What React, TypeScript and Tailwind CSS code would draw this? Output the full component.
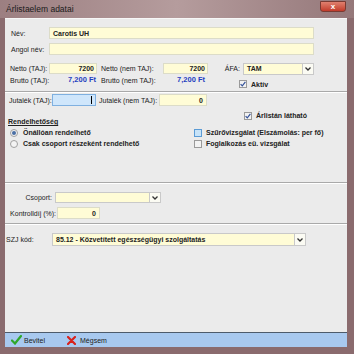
import React from "react";

function Box({ checked, hl }: { checked?: boolean; hl?: boolean }) {
  return (
    <div
      className={
        hl
          ? "w-[8px] h-[8px] border border-[#5b9bd5] bg-[#c7e3f8] flex items-center justify-center shrink-0"
          : "w-[8px] h-[8px] border border-[#9a9a9a] bg-[#f2f2f2] flex items-center justify-center shrink-0"
      }
    >
      {checked && (
        <svg width="6" height="6" viewBox="0 0 6 6">
          <path d="M0.6 3.1 L2.3 4.9 L5.4 0.9" stroke="#34529a" strokeWidth="1.2" fill="none" />
        </svg>
      )}
    </div>
  );
}

function Radio({ on }: { on?: boolean }) {
  return (
    <div className="w-[8px] h-[8px] rounded-full border border-[#a0a0a0] bg-[#f3f3f3] flex items-center justify-center shrink-0">
      {on && <div className="w-[4px] h-[4px] rounded-full bg-[#4a6fa5]" />}
    </div>
  );
}

function Arrow() {
  return (
    <div className="w-[11px] h-full border-l border-[#c9c9c9] bg-[#fbfbf3] flex items-center justify-center shrink-0">
      <svg width="6" height="4" viewBox="0 0 6 4">
        <path d="M0.5 0.5 L3 3 L5.5 0.5" stroke="#333" strokeWidth="1.3" fill="none" />
      </svg>
    </div>
  );
}

export default function App() {
  return (
    <div className="w-[354px] h-[354px] flex flex-col bg-[#8a6b6e] font-['Liberation_Sans',sans-serif] text-[7px] text-[#222] leading-none overflow-hidden whitespace-nowrap">
      {/* title bar */}
      <div className="h-[18px] flex items-center pl-[6px] pr-[8px] bg-gradient-to-r from-[#9c7f81] via-[#b59c9d] to-[#95787a] shrink-0">
        <span className="text-[8.5px] text-[#1a1a1a]">Árlistaelem adatai</span>
        <div className="ml-auto w-[26px] h-[11px] -mt-[5px] rounded-b-[3px] bg-gradient-to-b from-[#e0806f] to-[#c23a2a] border border-[#7a3a32] flex items-center justify-center">
          <span className="text-white font-bold text-[8px]">x</span>
        </div>
      </div>

      <div className="flex-1 flex pl-[5px] pr-[7px]">
        <div className="flex-1 flex flex-col bg-[#ebebeb] border-t border-[#f7f7f7]">
          {/* Név */}
          <div className="flex items-center h-[12px] mt-[8px]">
            <div className="w-[44px] pl-[6px]">Név:</div>
            <div className="w-[265px] h-full bg-[#fffcd6] border border-[#dcdcc8] flex items-center pl-[3px] font-bold">
              Carotis UH
            </div>
          </div>
          {/* Angol név */}
          <div className="flex items-center h-[12px] mt-[4px]">
            <div className="w-[44px] pl-[6px]">Angol név:</div>
            <div className="w-[265px] h-full bg-[#fffcd6] border border-[#dcdcc8]" />
          </div>
          {/* Netto */}
          <div className="flex items-center h-[11px] mt-[8px]">
            <div className="w-[44px] pl-[5px]">Netto (TAJ):</div>
            <div className="w-[48px] h-full bg-[#fffcd6] border border-[#dcdcc8] flex items-center justify-end pr-[2px] font-bold">
              7200
            </div>
            <div className="w-[66px] pl-[4px]">Netto (nem TAJ):</div>
            <div className="w-[45px] h-full bg-[#fffcd6] border border-[#dcdcc8] flex items-center justify-end pr-[2px] font-bold">
              7200
            </div>
            <div className="w-[35px] text-right pr-[3px]">ÁFA:</div>
            <div className="w-[71px] h-[12px] bg-[#fffcd6] border border-[#c9c9c9] flex items-center">
              <span className="flex-1 pl-[3px] font-bold">TAM</span>
              <Arrow />
            </div>
          </div>
          {/* Brutto */}
          <div className="flex items-start h-[14px]">
            <div className="h-[12px] flex items-center">
              <div className="w-[44px] pl-[5px]">Brutto (TAJ):</div>
              <div className="w-[47px] text-right font-bold text-[#1f3fc0] text-[7.5px]">7,200 Ft</div>
              <div className="w-[67px] pl-[5px]">Brutto (nem TAJ):</div>
              <div className="w-[42px] text-right font-bold text-[#1f3fc0] text-[7.5px]">7,200 Ft</div>
            </div>
            <div className="self-end flex items-center gap-[4px] ml-[34px]">
              <Box checked />
              <span className="font-bold">Aktív</span>
            </div>
          </div>
          {/* separator */}
          <div className="mt-[3px] h-[2px] border-t border-[#a9a9a9] bg-white" />
          {/* Jutalék */}
          <div className="flex items-center h-[12px] mt-[1px]">
            <div className="w-[47px] pl-[4px]">Jutalék (TAJ):</div>
            <div className="w-[44px] h-full bg-[#cfe6fb] border border-[#7fb0e0] flex items-center justify-end pr-[3px]">
              <span className="w-[1px] h-[8px] bg-black" />
            </div>
            <div className="w-[63px] pl-[3px]">Jutalék (nem TAJ):</div>
            <div className="w-[48px] h-full bg-[#fffcd6] border border-[#dcdcc8] flex items-center justify-end pr-[3px] font-bold">
              0
            </div>
          </div>
          {/* section */}
          <div className="flex h-[76px]">
            <div className="w-[189px] flex flex-col pt-[10px] pl-[3px]">
              <div className="h-[11px] flex items-center font-bold underline">Rendelhetőség</div>
              <div className="h-[11px] flex items-center gap-[5px] pl-[2px]">
                <Radio on />
                <span className="font-bold">Önállóan rendelhető</span>
              </div>
              <div className="h-[11px] flex items-center gap-[5px] pl-[2px]">
                <Radio />
                <span className="font-bold">Csak csoport részeként rendelhető</span>
              </div>
            </div>
            <div className="flex flex-col pt-[4px]">
              <div className="h-[11px] flex items-center gap-[4px] pl-[50px]">
                <Box checked />
                <span className="font-bold">Árlistán látható</span>
              </div>
              <div className="h-[11px] flex items-center gap-[4px] mt-[6px]">
                <Box hl />
                <span className="font-bold">Szűrővizsgálat (Elszámolás: per fő)</span>
              </div>
              <div className="h-[11px] flex items-center gap-[4px]">
                <Box />
                <span className="font-bold">Foglalkozás eü. vizsgálat</span>
              </div>
            </div>
          </div>
          <div className="h-[2px] border-t border-[#a9a9a9] bg-white" />
          {/* Csoport */}
          <div className="flex items-center h-[11px] mt-[8px]">
            <div className="w-[50px] text-right pr-[3px]">Csoport:</div>
            <div className="w-[106px] h-full bg-[#fffcd6] border border-[#c9c9c9] flex items-center">
              <span className="flex-1" />
              <Arrow />
            </div>
          </div>
          {/* Kontrolldíj */}
          <div className="flex items-center h-[12px] mt-[4px]">
            <div className="w-[52px] pr-[1px] text-right">Kontrolldíj (%):</div>
            <div className="w-[43px] h-full bg-[#fffcd6] border border-[#dcdcc8] flex items-center justify-end pr-[3px] font-bold">
              0
            </div>
          </div>
          <div className="mt-[4px] h-[2px] border-t border-[#a9a9a9] bg-white" />
          {/* SZJ */}
          <div className="flex items-center h-[13px] mt-[8px]">
            <div className="w-[47px] pl-[1px]">SZJ kód:</div>
            <div className="w-[254px] h-full bg-[#fffcd6] border border-[#c9c9c9] flex items-center">
              <span className="flex-1 pl-[3px] font-bold">85.12 - Közvetített egészségügyi szolgáltatás</span>
              <Arrow />
            </div>
          </div>
          <div className="flex-1" />
          {/* status bar */}
          <div className="h-[15px] border-t border-[#4d5b6b] bg-[#a8c9ef] flex items-center shrink-0">
            <div className="flex items-center ml-[6px] gap-[2px]">
              <svg width="11" height="10" viewBox="0 0 11 10">
                <path d="M1 5.5 L4 8.5 L10 1" stroke="#2fa82a" strokeWidth="2.2" fill="none" strokeLinecap="round" />
              </svg>
              <span>Bevitel</span>
            </div>
            <div className="flex items-center ml-[22px] gap-[4px]">
              <svg width="9" height="9" viewBox="0 0 9 9">
                <path d="M1 1 L8 8 M8 1 L1 8" stroke="#d8221c" strokeWidth="2.2" strokeLinecap="round" />
              </svg>
              <span>Mégsem</span>
            </div>
          </div>
        </div>
      </div>
      <div className="h-[7px] shrink-0" />
    </div>
  );
}
